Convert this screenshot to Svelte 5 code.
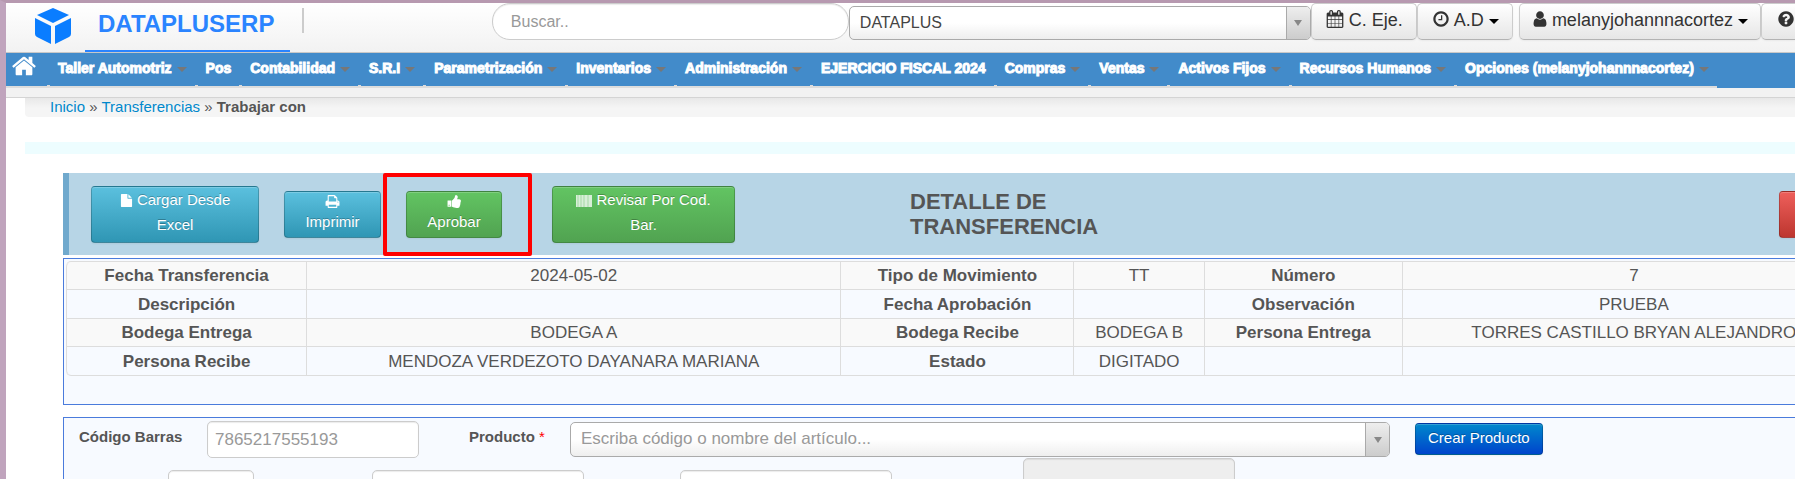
<script>
  const menu = [
    { label: 'Taller Automotriz', caret: true },
    { label: 'Pos', caret: false },
    { label: 'Contabilidad', caret: true },
    { label: 'S.R.I', caret: true },
    { label: 'Parametrización', caret: true },
    { label: 'Inventarios', caret: true },
    { label: 'Administración', caret: true },
    { label: 'EJERCICIO FISCAL 2024', caret: false },
    { label: 'Compras', caret: true },
    { label: 'Ventas', caret: true },
    { label: 'Activos Fijos', caret: true },
    { label: 'Recursos Humanos', caret: true },
    { label: 'Opciones (melanyjohannnacortez)', caret: true }
  ];

  // Label / value pairs, three per row
  const detail = [
    [['Fecha Transferencia', '2024-05-02'], ['Tipo de Movimiento', 'TT'], ['Número', '7']],
    [['Descripción', ''], ['Fecha Aprobación', ''], ['Observación', 'PRUEBA']],
    [['Bodega Entrega', 'BODEGA A'], ['Bodega Recibe', 'BODEGA B'], ['Persona Entrega', 'TORRES CASTILLO BRYAN ALEJANDRO']],
    [['Persona Recibe', 'MENDOZA VERDEZOTO DAYANARA MARIANA'], ['Estado', 'DIGITADO'], ['', '']]
  ];

  const icons = {
    home: 'M1472 992v480q0 26-19 45t-45 19h-384v-384h-256v384h-384q-26 0-45-19t-19-45v-480q0-1 .5-3t.5-3l575-474 575 474q1 2 1 6zm223-69l-62 74q-8 9-21 11h-3q-13 0-21-7l-692-577-692 577q-12 8-24 7-13-2-21-11l-62-74q-8-10-7-23.5t11-21.5l719-599q32-26 76-26t76 26l244 204v-195q0-14 9-23t23-9h192q14 0 23 9t9 23v408l219 182q10 8 11 21.5t-7 23.5z',
    calendar: 'M192 1664h288v-288h-288v288zm352 0h320v-288h-320v288zm-352-352h288v-320h-288v320zm352 0h320v-320h-320v320zm-352-384h288v-288h-288v288zm736 736h320v-288h-320v288zm-384-736h320v-288h-320v288zm768 736h288v-288h-288v288zm-384-352h320v-320h-320v320zm-352-864v-288q0-13-9.5-22.5t-22.5-9.5h-64q-13 0-22.5 9.5t-9.5 22.5v288q0 13 9.5 22.5t22.5 9.5h64q13 0 22.5-9.5t9.5-22.5zm736 864h288v-320h-288v320zm-384-384h320v-288h-320v288zm384 0h288v-288h-288v288zm32-480v-288q0-13-9.5-22.5t-22.5-9.5h-64q-13 0-22.5 9.5t-9.5 22.5v288q0 13 9.5 22.5t22.5 9.5h64q13 0 22.5-9.5t9.5-22.5zm384-64v1280q0 52-38 90t-90 38h-1408q-52 0-90-38t-38-90v-1280q0-52 38-90t90-38h128v-96q0-66 47-113t113-47h64q66 0 113 47t47 113v96h384v-96q0-66 47-113t113-47h64q66 0 113 47t47 113v96h128q52 0 90 38t38 90z',
    clock: 'M1024 544v448q0 14-9 23t-23 9h-320q-14 0-23-9t-9-23v-64q0-14 9-23t23-9h224v-352q0-14 9-23t23-9h64q14 0 23 9t9 23zm416 352q0-148-73-273t-198-198-273-73-273 73-198 198-73 273 73 273 198 198 273 73 273-73 198-198 73-273zm224 0q0 209-103 385.5t-279.5 279.5-385.5 103-385.5-103-279.5-279.5-103-385.5 103-385.5 279.5-279.5 385.5-103 385.5 103 279.5 279.5 103 385.5z',
    user: 'M1536 1399q0 109-62.5 187t-150.5 78h-854q-88 0-150.5-78t-62.5-187q0-85 8.5-160.5t31.5-152 58.5-131 94-89 134.5-34.5q131 128 313 128t313-128q76 0 134.5 34.5t94 89 58.5 131 31.5 152 8.5 160.5zm-256-887q0 159-112.5 271.5t-271.5 112.5-271.5-112.5-112.5-271.5 112.5-271.5 271.5-112.5 271.5 112.5 112.5 271.5z',
    help: 'M1024 1376v-192q0-14-9-23t-23-9h-192q-14 0-23 9t-9 23v192q0 14 9 23t23 9h192q14 0 23-9t9-23zm256-672q0-88-55.5-163t-138.5-116-170-41q-243 0-371 213-15 24 8 42l132 100q7 6 19 6 16 0 25-12 53-68 86-92 34-24 86-24 48 0 85.5 26t37.5 59q0 38-20 61t-68 45q-63 28-115.5 86.5t-52.5 125.5v36q0 14 9 23t23 9h192q14 0 23-9t9-23q0-19 21.5-49.5t54.5-49.5q32-18 49-28.5t46-35 44.5-48 28-60.5 12.5-81zm384 192q0 209-103 385.5t-279.5 279.5-385.5 103-385.5-103-279.5-279.5-103-385.5 103-385.5 279.5-279.5 385.5-103 385.5 103 279.5 279.5 103 385.5z',
    file: 'M1152 512v-472q22 14 36 28l408 408q14 14 28 36h-472zm-128 32q0 40 28 68t68 28h544v1056q0 40-28 68t-68 28h-1344q-40 0-68-28t-28-68v-1600q0-40 28-68t68-28h800v544z',
    print: 'M448 1536h896v-256h-896v256zm0-640h896v-384h-160q-40 0-68-28t-28-68v-160h-640v640zm1152 64q0-26-19-45t-45-19-45 19-19 45 19 45 45 19 45-19 19-45zm128 0v416q0 13-9.5 22.5t-22.5 9.5h-224v160q0 40-28 68t-68 28h-960q-40 0-68-28t-28-68v-160h-224q-13 0-22.5-9.5t-9.5-22.5v-416q0-79 56.5-135.5t135.5-56.5h64v-544q0-40 28-68t68-28h672q40 0 88 20t76 48l152 152q28 28 48 76t20 88v256h64q79 0 135.5 56.5t56.5 135.5z',
    thumb: 'M320 1344q0-26-19-45t-45-19q-27 0-45.5 19t-18.5 45q0 27 18.5 45.5t45.5 18.5q26 0 45-18.5t19-45.5zm160-512v640q0 26-19 45t-45 19h-288q-26 0-45-19t-19-45v-640q0-26 19-45t45-19h288q26 0 45 19t19 45zm1184 0q0 86-55 149 15 44 15 76 3 76-43 137 17 56 0 117-15 57-54 94 9 112-49 181-64 76-197 78h-129q-66 0-144-15.5t-121.5-29-120.5-39.5q-123-43-158-44-26-1-45-19.5t-19-44.5v-641q0-25 18-43.5t43-20.5q24-2 76-59t101-121q68-87 101-120 18-18 31-48t17.5-48.5 13.5-60.5q7-39 12.5-61t19.5-52 34-50q19-19 45-19 46 0 82.5 10.5t60 26 40 40.5 24 45 12 50 5 45 .5 39q0 38-9.5 76t-19 60-27.5 56q-3 6-10 18t-11 22-8 24h277q78 0 135 57t57 135z'
  };

  let search = $state('');
  let barcode = $state('');
</script>

{#snippet icon(name, size)}
  <svg class="icon" width={size} height={size} viewBox="0 0 1792 1792" fill="currentColor" aria-hidden="true">
    <path d={icons[name]} />
  </svg>
{/snippet}

<div class="page">
  <header class="topbar">
    <a class="brand" href="#inicio">
      <svg class="cube" width="36" height="38" viewBox="0 0 36 38" fill="#0a7dff" aria-hidden="true">
        <path d="M18 1 34 8 18 16 2 8z" />
        <path d="M0 11 16 19V37L2 30Q0 29 0 27z" />
        <path d="M36 11 20 19V37L34 30Q36 29 36 27z" />
      </svg>
      <span class="brand-name">DATAPLUSERP</span>
    </a>
    <span class="divider"></span>

    <input class="search" type="text" placeholder="Buscar.." aria-label="Buscar" bind:value={search} />
    <div class="chosen company">
      <select aria-label="Empresa">
        <option>DATAPLUS</option>
      </select>
      <span class="chosen-arrow"></span>
    </div>
    <button class="tool">{@render icon('calendar', 18)} C. Eje.</button>
    <button class="tool">{@render icon('clock', 18)} A.D <span class="caret"></span></button>
    <button class="tool user">{@render icon('user', 18)} melanyjohannnacortez <span class="caret"></span></button>
    <button class="tool help" aria-label="Ayuda">{@render icon('help', 18)}</button>
  </header>

  <nav class="menu">
    <a class="home" href="#inicio" aria-label="Inicio">{@render icon('home', 26)}</a>
    <ul>
      {#each menu as item}
        <li>
          <a href="#menu">{item.label}{#if item.caret}<span class="menu-caret"></span>{/if}</a>
        </li>
      {/each}
    </ul>
  </nav>
  <div class="subbar"></div>

  <div class="breadcrumb">
    <a href="#inicio">Inicio</a> » <a href="#transferencias">Transferencias</a> » <strong>Trabajar con</strong>
  </div>

  <div class="notice"></div>

  <main>
    <div class="title-bar">
      <button class="btn info tall excel">{@render icon('file', 13)} Cargar Desde Excel</button>
      <button class="btn info print">{@render icon('print', 15)}<br />Imprimir</button>
      <div class="approve">
        <button class="btn success">{@render icon('thumb', 15)}<br />Aprobar</button>
      </div>
      <button class="btn success tall review">
        <svg class="icon" width="16" height="12" viewBox="0 0 16 12" fill="#fff" aria-hidden="true">
          <rect width="16" height="12" opacity="0.6" />
          <path d="M0 0h1v12H0zM3 0h1v12H3zM6 0h1v12H6zM9 0h2v12H9zM13 0h3v12h-3z" opacity="0.4" />
        </svg>
        Revisar Por Cod. Bar.
      </button>
      <h1>DETALLE DE TRANSFERENCIA</h1>
      <button class="btn danger" aria-label="Cerrar"></button>
    </div>

    <section class="panel">
      <table>
        <colgroup>
          <col class="c1" /><col class="c2" /><col class="c3" /><col class="c4" /><col class="c5" /><col />
        </colgroup>
        <tbody>
          {#each detail as row}
            <tr>
              {#each row as [label, value]}
                <th scope="row">{label}</th>
                <td>{value}</td>
              {/each}
            </tr>
          {/each}
        </tbody>
      </table>
    </section>

    <form class="panel entry">
      <div class="line">
        <label class="code-label" for="codigo">Código Barras</label>
        <input class="field code" id="codigo" type="text" placeholder="7865217555193" bind:value={barcode} />
        <label class="product-label" for="producto">Producto <span class="required">*</span></label>
        <div class="chosen product">
          <select id="producto">
            <option>Escriba código o nombre del artículo...</option>
          </select>
          <span class="chosen-arrow"></span>
        </div>
        <button class="btn primary" type="button">Crear Producto</button>
      </div>
      <div class="line second">
        <input class="field small" type="text" aria-label="Cantidad" />
        <input class="field medium" type="text" aria-label="Costo" />
        <input class="field medium next" type="text" aria-label="Total" />
        <textarea class="field remark" aria-label="Detalle" readonly></textarea>
      </div>
    </form>
  </main>
</div>

<style>
  :global(body) {
    background: #fff;
  }

  .page {
    box-sizing: border-box;
    height: 100vh;
    overflow: hidden;
    border-top: 3px solid #b799b0;
    border-left: 6px solid #c0a4bd;
    font-family: Arial, "Liberation Sans", sans-serif;
    font-size: 15px;
    color: #555;
  }

  .page :global(*) {
    box-sizing: border-box;
  }

  button,
  input,
  select,
  textarea {
    font-family: inherit;
    margin: 0;
  }

  .icon {
    vertical-align: -2px;
  }

  /* Top bar */
  .topbar {
    display: flex;
    align-items: flex-start;
    height: 50px;
    border-bottom: 1px solid #c8c8c8;
    background: linear-gradient(#fff, #f2f2f2);
    white-space: nowrap;
  }

  .brand {
    display: flex;
    height: 49px;
    padding-left: 29px;
    text-decoration: none;
  }

  .cube {
    margin: 4px 14px 0 0;
  }

  .brand-name {
    padding: 0 16px 0 13px;
    border-bottom: 2px solid #2a84ff;
    color: #2a84ff;
    font-size: 24px;
    font-weight: bold;
    line-height: 41px;
  }

  .divider {
    width: 2px;
    height: 25px;
    margin: 5px 0 0 12px;
    background: #ccc;
  }

  .search {
    width: 357px;
    height: 37px;
    margin-left: auto;
    padding: 0 18px;
    border: 1px solid #ccc;
    border-radius: 18px;
    background: #fff;
    box-shadow: inset 0 1px 1px rgba(0, 0, 0, 0.08);
    font-size: 16px;
    color: #555;
  }

  ::placeholder {
    color: #999;
    opacity: 1;
  }

  .chosen {
    position: relative;
    height: 35px;
  }

  .chosen select {
    width: 100%;
    height: 100%;
    padding: 0 34px 2px 10px;
    border: 1px solid #aaa;
    border-radius: 5px;
    appearance: none;
    background: linear-gradient(#fff 50%, #eee);
    font-size: 17px;
    color: #999;
  }

  .chosen-arrow {
    position: absolute;
    top: 1px;
    right: 1px;
    bottom: 1px;
    display: flex;
    align-items: center;
    justify-content: center;
    width: 24px;
    border-left: 1px solid #aaa;
    border-radius: 0 4px 4px 0;
    background: linear-gradient(#eee, #ccc);
    pointer-events: none;
  }

  .chosen-arrow::after {
    content: '';
    border: 4px solid transparent;
    border-top: 6px solid #888;
    border-bottom: 0;
  }

  .company {
    width: 462px;
    height: 34px;
    margin-top: 3px;
  }

  .company select {
    font-size: 16px;
    color: #444;
  }

  .tool {
    height: 37px;
    padding: 0 13px 2px 14px;
    border: 1px solid #ccc;
    border-bottom-color: #b3b3b3;
    border-radius: 5px;
    background: linear-gradient(#fff, #e6e6e6);
    box-shadow: inset 0 1px 0 rgba(255, 255, 255, 0.2), 0 1px 2px rgba(0, 0, 0, 0.05);
    font-size: 18px;
    color: #333;
  }

  .user {
    margin-left: 6px;
    padding: 0 12px 2px 13px;
  }

  /* The user glyph is narrower than its box */
  .user .icon {
    margin: 0 -2px;
  }

  .help {
    width: 34px;
    padding-right: 0;
    border-right: 0;
    border-radius: 5px 0 0 5px;
  }

  .caret {
    display: inline-block;
    border: 5px solid transparent;
    border-top-color: #000;
    border-bottom: 0;
    vertical-align: middle;
  }

  /* Main menu */
  .menu {
    display: flex;
    height: 35px;
    margin-left: -5px;
    background: linear-gradient(to right, #6a6ca6 5px, #428bca 5px);
  }

  .home {
    width: 46px;
    padding-left: 10px;
    border-bottom: 2px solid #ddd;
    color: #fff;
    line-height: 25px;
  }

  .menu ul {
    display: flex;
    margin: 0;
    padding: 0;
    border-bottom: 2px solid #ddd;
    list-style: none;
    white-space: nowrap;
  }

  .menu li {
    background: linear-gradient(#ddd, #ddd) left bottom / 3px 1px no-repeat;
  }

  .menu a {
    text-decoration: none;
  }

  .menu li a {
    display: block;
    padding: 0 8px 0 11px;
    color: #fff;
    font-size: 14px;
    font-weight: bold;
    line-height: 30px;
    -webkit-text-stroke: 1px #fff;
  }

  .menu-caret {
    display: inline-block;
    margin-left: 5px;
    border: 5px solid transparent;
    border-top-color: #777;
    border-bottom: 0;
    vertical-align: middle;
  }

  .subbar {
    height: 10px;
    border-bottom: 1px solid #d4d4d4;
    background: #f2f2f2;
  }

  .breadcrumb {
    height: 19px;
    margin-left: 19px;
    padding-left: 25px;
    border-radius: 0 0 0 4px;
    background: linear-gradient(#e8e8e8, #f5f5f5 10px);
    line-height: 17px;
  }

  .breadcrumb a {
    color: #0088cc;
    text-decoration: none;
  }

  .notice {
    height: 12px;
    margin: 25px 0 19px 19px;
    background: #edfdff;
  }

  /* Content is wider than the window and runs past its right edge */
  main {
    margin: 0 -74px 0 57px;
  }

  .title-bar {
    display: flex;
    align-items: center;
    height: 82px;
    padding: 0 0 0 22px;
    border-left: 6px solid #70a9cd;
    background: #b7d5e6;
  }

  .btn {
    flex: none;
    min-height: 47px;
    padding: 1px 12px 4px;
    border: 1px solid rgba(0, 0, 0, 0.2);
    border-bottom-color: rgba(0, 0, 0, 0.3);
    border-radius: 4px;
    box-shadow: inset 0 1px 0 rgba(255, 255, 255, 0.2), 0 1px 2px rgba(0, 0, 0, 0.05);
    color: #fff;
    font-size: 15px;
    line-height: 20px;
    text-shadow: 0 -1px 0 rgba(0, 0, 0, 0.25);
  }

  .title-bar .btn {
    padding-top: 0;
    padding-bottom: 5px;
  }

  .info {
    background: linear-gradient(#5bc0de, #2f96b4);
  }

  .success {
    background: linear-gradient(#62c462, #51a351);
  }

  .danger {
    width: 90px;
    margin-left: auto;
    background: linear-gradient(#ee5f5b, #bd362f);
  }

  .tall {
    padding: 1px 20px 4px;
    line-height: 25px;
  }

  .excel {
    width: 168px;
  }

  .print {
    width: 97px;
    margin-left: 25px;
  }

  .approve {
    position: relative;
    margin-left: 25px;
  }

  .approve .btn {
    display: block;
    width: 96px;
  }

  .approve::after {
    content: '';
    position: absolute;
    inset: -18px -30px -18px -23px;
    border: 4px solid #f00;
    border-radius: 2px;
    pointer-events: none;
  }

  .review {
    width: 183px;
    margin-left: 50px;
  }

  h1 {
    width: 220px;
    margin: 0 0 0 175px;
    font-size: 22px;
    line-height: 25px;
  }

  .panel {
    height: 147px;
    margin-top: 3px;
    padding: 2px;
    border: 1px solid #4a7bdc;
    background: #f7faff;
  }

  table {
    width: 100%;
    height: 115px;
    table-layout: fixed;
    border: 1px solid #ddd;
    border-left: 0;
    border-radius: 5px;
    border-spacing: 0;
    font-size: 17px;
    line-height: 20px;
    text-align: center;
  }

  .c1 { width: 13.35%; }
  .c2 { width: 29.7%; }
  .c3 { width: 12.95%; }
  .c4 { width: 7.25%; }
  .c5 { width: 11%; }

  th,
  td {
    padding: 1px 0 0;
    border-left: 1px solid #ddd;
  }

  tr + tr th,
  tr + tr td {
    border-top: 1px solid #ddd;
  }

  tr:nth-child(odd) > * {
    background: #f9f9f9;
  }

  tr:first-child th:first-child {
    border-top-left-radius: 5px;
  }

  tr:last-child th:first-child {
    border-bottom-left-radius: 5px;
  }

  /* Product entry */
  .entry {
    margin-top: 12px;
    padding: 3px 0 0 15px;
  }

  .line {
    display: flex;
    align-items: flex-start;
  }

  label {
    font-weight: bold;
    line-height: 32px;
  }

  .required {
    color: #f00;
    font-weight: normal;
  }

  .code-label {
    width: 128px;
  }

  .product-label {
    width: 101px;
    margin-left: 50px;
  }

  .field {
    height: 37px;
    padding: 0 7px;
    border: 1px solid #ccc;
    border-radius: 5px;
    background: #fff;
    box-shadow: inset 0 1px 1px rgba(0, 0, 0, 0.08);
    font-size: 17px;
    color: #555;
  }

  .code,
  .medium,
  .remark {
    width: 212px;
  }

  .product {
    flex: none;
    width: 820px;
    margin-top: 1px;
  }

  .primary {
    min-height: 32px;
    margin: 2px 0 0 25px;
    background: linear-gradient(#0088cc, #0044cc);
  }

  .second {
    padding-left: 89px;
  }

  .second .field {
    margin-top: 12px;
  }

  .small {
    width: 86px;
  }

  .second .medium {
    margin-left: 118px;
  }

  .second .next {
    margin-left: 96px;
  }

  .second .remark {
    height: 60px;
    margin: 0 0 0 131px;
    background: #eee;
    resize: none;
  }
</style>
